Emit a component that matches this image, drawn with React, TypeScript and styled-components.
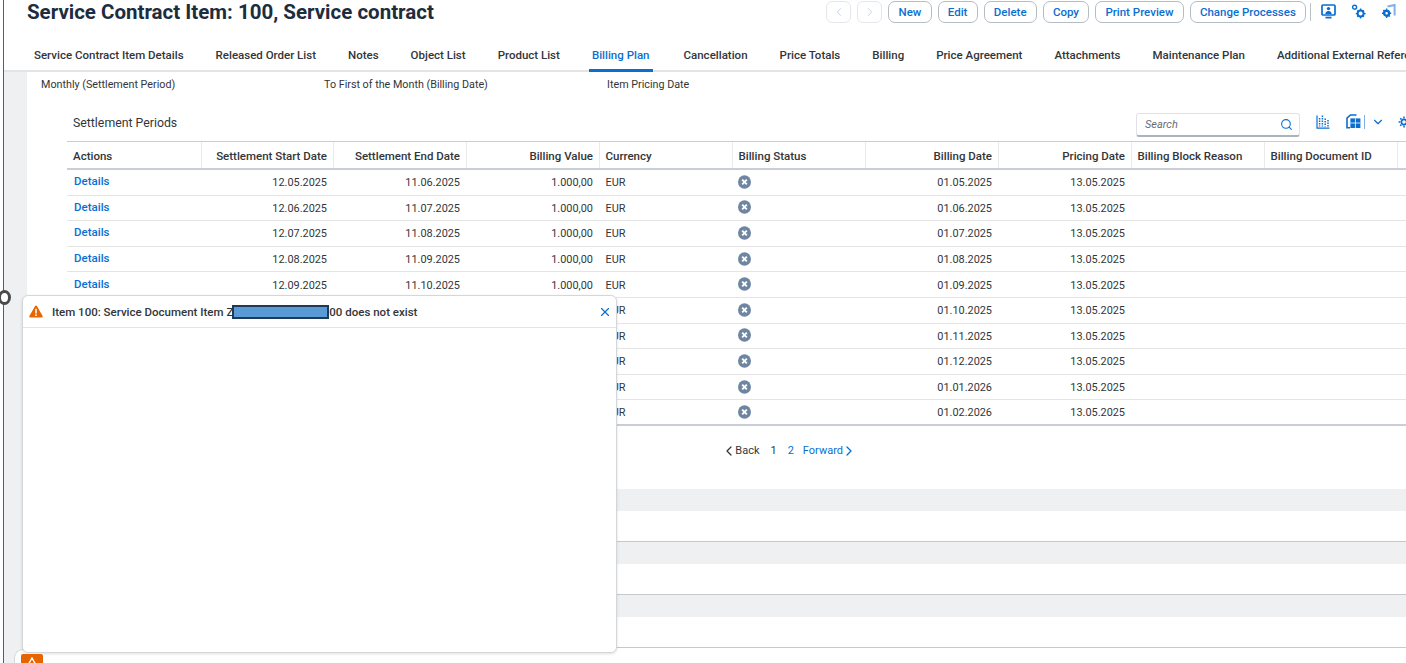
import React from "react";
import styled, { createGlobalStyle } from "styled-components";
import { ChevronLeft, ChevronRight, ChevronDown, Search, X } from "lucide-react";

const GlobalStyle = createGlobalStyle`
  html, body { margin: 0; padding: 0; background: #fff; }
  body { font-family: Roboto, "Liberation Sans", sans-serif; color: #32363a; font-size: 11.5px; }
`;

const tabs = [
  "Service Contract Item Details", "Released Order List", "Notes", "Object List", "Product List", "Billing Plan",
  "Cancellation", "Price Totals", "Billing", "Price Agreement", "Attachments", "Maintenance Plan", "Additional External References",
];
const actions = ["New", "Edit", "Delete", "Copy", "Print Preview", "Change Processes"];
const columns = [
  { label: "Actions" }, { label: "Settlement Start Date", end: true }, { label: "Settlement End Date", end: true },
  { label: "Billing Value", end: true }, { label: "Currency" }, { label: "Billing Status" },
  { label: "Billing Date", end: true }, { label: "Pricing Date", end: true }, { label: "Billing Block Reason" },
  { label: "Billing Document ID" }, { label: "" },
];
const rows = [
  ["12.05.2025", "11.06.2025", "01.05.2025"], ["12.06.2025", "11.07.2025", "01.06.2025"],
  ["12.07.2025", "11.08.2025", "01.07.2025"], ["12.08.2025", "11.09.2025", "01.08.2025"],
  ["12.09.2025", "11.10.2025", "01.09.2025"], ["12.10.2025", "11.11.2025", "01.10.2025"],
  ["12.11.2025", "11.12.2025", "01.11.2025"], ["12.12.2025", "11.01.2026", "01.12.2025"],
  ["12.01.2026", "11.02.2026", "01.01.2026"], ["12.02.2026", "11.03.2026", "01.02.2026"],
];

const StatusIcon = () => (
  <svg width="13" height="14" viewBox="0 0 13 14">
    <ellipse cx="6.5" cy="7" rx="6.5" ry="6.7" fill="#6f86a3" />
    <path d="M4.2 4.7l4.6 4.6M8.8 4.7l-4.6 4.6" stroke="#fff" strokeWidth="1.9" />
  </svg>
);

const ScreenIcon = () => (
  <svg width="15" height="15" viewBox="0 0 15 15">
    <rect x="1" y="1" width="13" height="10" rx="1" fill="none" stroke="#0a6ed1" strokeWidth="1.7" />
    <circle cx="7.5" cy="4.6" r="1.7" fill="#0a6ed1" />
    <path d="M4.3 10c.3-2.3 1.5-3 3.2-3s2.9.7 3.2 3z" fill="#0a6ed1" />
    <path d="M4.5 13.6h6" stroke="#0a6ed1" strokeWidth="1.8" />
  </svg>
);

const GearsIcon = () => (
  <svg width="15" height="15" viewBox="0 0 15 15" fill="none" stroke="#0a6ed1">
    <circle cx="3.6" cy="3.2" r="2" strokeWidth="1.4" />
    <circle cx="9.6" cy="9.6" r="3" strokeWidth="2" />
    <path d="M9.6 4.6v1.6M9.6 13v1.4M4.8 9.6h1.6M13 9.6h1.6M6.4 6.4l1 1M11.8 11.8l1 1M12.8 6.4l-1 1M7.4 11.8l-1 1" strokeWidth="1.4" />
  </svg>
);

const RelatedIcon = () => (
  <svg width="15" height="15" viewBox="0 0 15 15" fill="none">
    <circle cx="5.6" cy="9.2" r="2.5" stroke="#0a6ed1" strokeWidth="2.4" />
    <path d="M5.6 4.4v1.4M5.6 12.6V14M1 9.2h1.4M8.8 9.2h1.4M2.4 6l1 1M8.8 12.4l-1-1" stroke="#0a6ed1" strokeWidth="1.4" />
    <path d="M6.5 2.6L13.6 1v10.5" stroke="#7fb1e6" strokeWidth="2" />
  </svg>
);

const ChartIcon = () => (
  <svg width="14" height="14" viewBox="0 0 14 14" fill="none" stroke="#0a6ed1">
    <path d="M1 .5v12.7h12.5" strokeWidth="1.2" />
    <path d="M3.6 3v8.5M6.4 .5v11M9.2 3.5v8M12 5v6.5" strokeWidth="1.5" strokeDasharray="1.6 .9" />
  </svg>
);

const CopyTableIcon = () => (
  <svg width="15" height="15" viewBox="0 0 15 15" fill="none">
    <path d="M10.5 1H4.4L1 4.2v9.6h3" stroke="#0a6ed1" strokeWidth="1.6" />
    <rect x="4.4" y="4.4" width="10" height="9.6" fill="#0a6ed1" />
    <path d="M9.4 4.4v9.6M4.4 9h10" stroke="#fff" strokeWidth=".8" />
  </svg>
);

const CutGearIcon = () => (
  <svg width="8" height="14" viewBox="0 0 8 14" fill="none" stroke="#0a6ed1">
    <circle cx="6" cy="7" r="2.6" strokeWidth="1.6" />
    <path d="M6 1.5V3.4M6 10.6v1.9M.6 7h1.8M2.2 3.2l1.2 1.2M2.2 10.8l1.2-1.2" strokeWidth="1.5" />
  </svg>
);

const WarningIcon = () => (
  <svg width="14" height="13" viewBox="0 0 14 13">
    <path d="M7 .6c.4 0 .7.2.9.5l5.7 10c.4.7 0 1.5-.9 1.5H1.3c-.9 0-1.3-.8-.9-1.5l5.7-10c.2-.3.5-.5.9-.5z" fill="#e76500" />
    <path d="M7 3.8v4.6" stroke="#fff" strokeWidth="1.5" />
    <circle cx="7" cy="10.2" r=".9" fill="#fff" />
  </svg>
);

export default function App() {
  return (
    <Page>
      <GlobalStyle />
      <Frame>
        <TitleBar>
          <Title>Service Contract Item: 100, Service contract</Title>
          <Actions>
            <NavButton><ChevronLeft size={14} strokeWidth={1.5} /></NavButton>
            <NavButton><ChevronRight size={14} strokeWidth={1.5} /></NavButton>
            {actions.map((a) => <ActionButton key={a}>{a}</ActionButton>)}
            <BarDivider />
            <BarIcon><ScreenIcon /></BarIcon>
            <BarIcon><GearsIcon /></BarIcon>
            <BarIcon><RelatedIcon /></BarIcon>
          </Actions>
        </TitleBar>

        <TabBar>
          {tabs.map((t) => <Tab key={t} $active={t === "Billing Plan"}>{t}</Tab>)}
        </TabBar>

        <Body>
          <Content>
            <Summary>
              <span>Monthly (Settlement Period)</span>
              <span>To First of the Month (Billing Date)</span>
              <span>Item Pricing Date</span>
            </Summary>

            <TableArea>
              <TableToolbar>
                <TableTitle>Settlement Periods</TableTitle>
                <SearchBox>
                  <SearchHint>Search</SearchHint>
                  <Search size={13} color="#0a6ed1" />
                </SearchBox>
                <ToolIcons>
                  <ChartIcon />
                  <CopyTableIcon />
                  <ToolDivider />
                  <ChevronDown size={14} strokeWidth={2} color="#0a6ed1" />
                  <CutGearIcon />
                </ToolIcons>
              </TableToolbar>

              <HeaderRow>
                {columns.map((c, i) => <HeadCell key={i} $end={c.end}>{c.label}</HeadCell>)}
              </HeaderRow>
              {rows.map((r, i) => (
                <Row key={i} $last={i === rows.length - 1}>
                  <Cell><DetailLink>Details</DetailLink></Cell>
                  <Cell $end>{r[0]}</Cell>
                  <Cell $end>{r[1]}</Cell>
                  <Cell $end>1.000,00</Cell>
                  <Cell>EUR</Cell>
                  <Cell><StatusMark><StatusIcon /></StatusMark></Cell>
                  <Cell $end>{r[2]}</Cell>
                  <Cell $end>13.05.2025</Cell>
                  <Cell /><Cell /><Cell />
                </Row>
              ))}
            </TableArea>

            <Pager>
              <PagerBack><ChevronLeft size={16} strokeWidth={1.9} color="#32363a" /></PagerBack>
              <PagerLabel>Back</PagerLabel>
              <PageNumber>1</PageNumber>
              <PageNumber $link>2</PageNumber>
              <PagerLabel $link>Forward</PagerLabel>
              <PagerNext><ChevronRight size={16} strokeWidth={1.9} color="#0a6ed1" /></PagerNext>
            </Pager>

            <EmptySection /><EmptySection /><EmptySection />
          </Content>
        </Body>
      </Frame>

      <Ring />
      <BottomPanel />
      <Popover>
        <PopoverHead>
          <WarningIcon />
          <PopoverText>
            Item 100: Service Document Item Z<Redaction />00 does not exist
          </PopoverText>
          <CloseButton><X size={14} strokeWidth={2} /></CloseButton>
        </PopoverHead>
      </Popover>
      <MessageButton>
        <svg width="12" height="9" viewBox="0 0 12 9"><path d="M6 1l4.5 8h-9z" fill="none" stroke="#fff" strokeWidth="1.4" /></svg>
      </MessageButton>
    </Page>
  );
}

const Page = styled.div`
  position: relative;
  height: 663px;
  overflow: hidden;
`;

const Frame = styled.div`
  height: 663px;
  margin-left: 3px;
  border-left: 1px solid #5c5c5c;
`;

const TitleBar = styled.header`
  display: flex;
  justify-content: space-between;
  align-items: flex-start;
  height: 40px;
  padding-left: 23px;
`;

const Title = styled.h1`
  margin: 0;
  font-size: 20.5px;
  line-height: 24px;
  font-weight: 700;
  color: #1d2d3e;
`;

const Actions = styled.div`
  display: flex;
  align-items: center;
  gap: 6px;
  height: 23px;
  padding-right: 6px;
`;

const NavButton = styled.button`
  display: flex;
  align-items: center;
  justify-content: center;
  width: 25px;
  height: 22px;
  padding: 0;
  border: 1px solid #e4e8ec;
  border-radius: 6px;
  background: #fff;
  color: #b5cfea;
`;

const ActionButton = styled.button`
  height: 22px;
  padding: 0 9.2px;
  border: 1px solid #b4bcc4;
  border-radius: 7px;
  background: #fff;
  color: #0a6ed1;
  font: 500 11.5px Roboto, "Liberation Sans", sans-serif;
`;

const BarDivider = styled.span`
  width: 1px;
  height: 18px;
  margin: 0 -1px 0 -2px;
  background: #b8c0c8;
`;

const BarIcon = styled.span`
  display: flex;
  width: 15px;
  margin-left: 5px;
  margin-right: 4px;
`;

const TabBar = styled.nav`
  display: flex;
  height: 32px;
  padding-left: 14px;
  border-bottom: 2px solid #e2e4e6;
  box-sizing: border-box;
  white-space: nowrap;
`;

const Tab = styled.div<{ $active?: boolean }>`
  position: relative;
  padding: 0 ${(p) => (p.$active ? "18px" : "16px")} 0 16px;
  line-height: 30px;
  font-weight: 500;
  color: ${(p) => (p.$active ? "#0a6ed1" : "#32363a")};
  &::after {
    content: "";
    display: ${(p) => (p.$active ? "block" : "none")};
    position: absolute;
    left: 13px;
    right: 15px;
    bottom: -2px;
    height: 3px;
    background: #0a6ed1;
  }
`;

const Body = styled.main`
  padding-left: 1px;
  background: #eef0f2;
`;

const Content = styled.div`
  margin-left: 22px;
  background: #fff;
  height: 591px;
`;

const Summary = styled.div`
  display: grid;
  grid-template-columns: repeat(3, 283px);
  box-sizing: border-box;
  height: 25px;
  padding-left: 14px;
  align-items: center;
  font-size: 10.75px;
`;

const TableArea = styled.section`
  margin-left: 40px;
`;

const TableToolbar = styled.div`
  display: flex;
  align-items: center;
  box-sizing: border-box;
  height: 44px;
  padding-top: 11px;
`;

const TableTitle = styled.h2`
  margin: -3px 0 0 6px;
  flex: 1;
  font-size: 12.3px;
  font-weight: 400;
`;

const SearchBox = styled.div`
  display: flex;
  align-items: center;
  justify-content: space-between;
  box-sizing: border-box;
  width: 164px;
  height: 24px;
  padding: 0 6px 0 8px;
  border: 1px solid #dfe3e7;
  border-bottom: 2px solid #a9b4be;
  border-radius: 3px;
`;

const SearchHint = styled.span`
  font-style: italic;
  font-size: 11px;
  color: #6a6d70;
`;

const ToolIcons = styled.div`
  display: flex;
  align-items: center;
  width: 106px;
  margin-top: -6px;
  padding-left: 16px;
  box-sizing: border-box;
  overflow: hidden;
  flex-shrink: 0;
  & > svg { flex-shrink: 0; }
  & > svg:nth-child(2) { margin-left: 16px; }
  & > svg:nth-child(4) { margin-left: 6px; }
  & > svg:last-child { margin-left: 13px; }
`;

const ToolDivider = styled.span`
  width: 1px;
  height: 14px;
  margin-left: 3px;
  background: #7fb1e6;
`;

const gridColumns = "135px 132px repeat(8, 133px) 1fr";

const HeaderRow = styled.div`
  display: grid;
  grid-template-columns: ${gridColumns};
  box-sizing: border-box;
  height: 29px;
  border-top: 1px solid #c8ced4;
  border-bottom: 2px solid #c8ced4;
`;

const HeadCell = styled.div<{ $end?: boolean }>`
  display: flex;
  align-items: center;
  padding: 1px 6px 0 5.5px;
  font-weight: 500;
  white-space: nowrap;
  border-right: 1px solid #e8eaec;
  justify-content: ${(p) => (p.$end ? "flex-end" : "flex-start")};
  &:first-child { padding-left: 6px; }
`;

const Row = styled.div<{ $last?: boolean }>`
  display: grid;
  grid-template-columns: ${gridColumns};
  box-sizing: border-box;
  height: 25.6px;
  font-size: 10.9px;
  border-bottom: ${(p) => (p.$last ? "2px solid #c8ced4" : "1px solid #e5e5e5")};
`;

const Cell = styled.div<{ $end?: boolean }>`
  display: flex;
  align-items: center;
  padding: 1px 7px 0 5.5px;
  justify-content: ${(p) => (p.$end ? "flex-end" : "flex-start")};
  &:first-child { padding-left: 6px; }
`;

const StatusMark = styled.span`
  display: flex;
  margin: -2px 0 0 -1px;
`;

const DetailLink = styled.a`
  color: #0a6ed1;
  font-size: 11.5px;
  font-weight: 500;
  margin: -3px 0 0 1px;
`;

const Pager = styled.div`
  display: flex;
  align-items: center;
  justify-content: flex-end;
  height: 50px;
  width: 830px;
  margin-bottom: 13px;
  font-size: 11px;
`;

const PagerBack = styled.span`
  display: flex;
  margin-right: -2px;
`;

const PagerNext = styled.span`
  display: flex;
  margin-left: -2px;
`;

const PagerLabel = styled.span<{ $link?: boolean }>`
  color: ${(p) => (p.$link ? "#0a6ed1" : "#32363a")};
  margin-left: ${(p) => (p.$link ? "9px" : "0")};
`;

const PageNumber = styled.span<{ $link?: boolean }>`
  margin-left: 11px;
  color: ${(p) => (p.$link ? "#0a6ed1" : "#32363a")};
`;

const EmptySection = styled.div`
  box-sizing: border-box;
  height: 53px;
  border-bottom: 1.5px solid #c4c9ce;
  &::before {
    content: "";
    display: block;
    height: 22px;
    background: #eff0f2;
  }
`;

const Ring = styled.span`
  position: absolute;
  left: -2px;
  top: 290px;
  box-sizing: border-box;
  width: 13px;
  height: 15px;
  border: 3px solid #4a4a4a;
  border-radius: 50%;
  background: #fff;
`;

const BottomPanel = styled.span`
  position: absolute;
  left: 14px;
  top: 649px;
  width: 300px;
  height: 30px;
  background: #fff;
  border: 1px solid #d4d7da;
  border-right: 0;
  border-radius: 9px 0 0 0;
`;

const Popover = styled.aside`
  position: absolute;
  left: 22px;
  top: 295px;
  box-sizing: border-box;
  width: 595px;
  height: 358px;
  background: #fff;
  border: 1px solid #d4d7da;
  border-radius: 6px;
  box-shadow: 0 1px 3px rgba(0, 0, 0, 0.12);
`;

const PopoverHead = styled.div`
  display: flex;
  align-items: center;
  height: 31px;
  padding: 0 4px 0 6px;
  border-bottom: 1px solid #e5e5e5;
`;

const PopoverText = styled.span`
  flex: 1;
  display: flex;
  align-items: center;
  margin-left: 9px;
  font-weight: 500;
  white-space: pre;
`;

const Redaction = styled.span`
  display: inline-block;
  box-sizing: border-box;
  width: 97px;
  height: 14px;
  margin-left: -1px;
  background: #5b9bd5;
  border: 2px solid #1f3a57;
`;

const CloseButton = styled.span`
  display: flex;
  color: #0a6ed1;
`;

const MessageButton = styled.span`
  position: absolute;
  left: 21px;
  top: 654px;
  display: flex;
  justify-content: center;
  padding-top: 3px;
  box-sizing: border-box;
  width: 22px;
  height: 22px;
  background: #e76500;
  border-radius: 2px;
`;
